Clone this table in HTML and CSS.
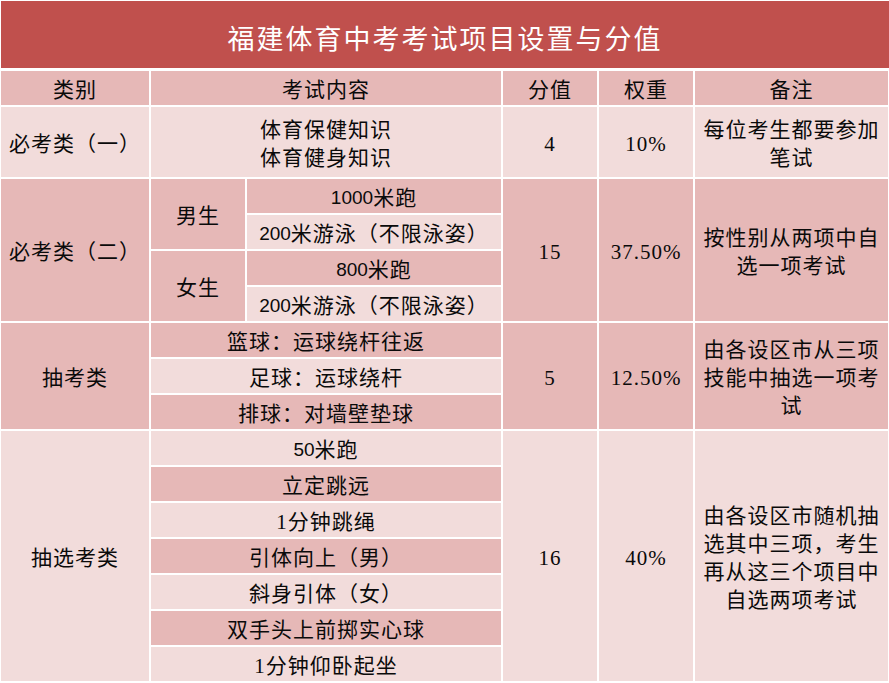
FILE: index.html
```html
<!DOCTYPE html>
<html lang="zh-CN">
<head>
<meta charset="utf-8">
<title>福建体育中考考试项目设置与分值</title>
<link rel="stylesheet" href="styles.css">
</head>
<body>
<div class="page">
  <div class="title">福建体育中考考试项目设置与分值</div>
  <div class="grid">
    <div class="cell dk">类别</div>
    <div class="cell dk c2">考试内容</div>
    <div class="cell dk">分值</div>
    <div class="cell dk">权重</div>
    <div class="cell dk">备注</div>

    <div class="cell lt r2">必考类（一）</div>
    <div class="cell lt c2 r2 lines"><span>体育保健知识</span><span>体育健身知识</span></div>
    <div class="cell lt r2">4</div>
    <div class="cell lt r2">10%</div>
    <div class="cell lt r2 note">每位考生都要参加笔试</div>

    <div class="cell dk r4">必考类（二）</div>
    <div class="cell dk r2">男生</div>
    <div class="cell dk"><span class="sn">1000</span>米跑</div>
    <div class="cell dk r4">15</div>
    <div class="cell dk r4">37.50%</div>
    <div class="cell dk r4 note">按性别从两项中自选一项考试</div>
    <div class="cell lt"><span class="sn">200</span>米游泳（不限泳姿）</div>
    <div class="cell dk r2">女生</div>
    <div class="cell dk"><span class="sn">800</span>米跑</div>
    <div class="cell lt"><span class="sn">200</span>米游泳（不限泳姿）</div>

    <div class="cell dk r3">抽考类</div>
    <div class="cell dk c2">篮球：运球绕杆往返</div>
    <div class="cell dk r3">5</div>
    <div class="cell dk r3">12.50%</div>
    <div class="cell dk r3 note">由各设区市从三项技能中抽选一项考试</div>
    <div class="cell lt c2">足球：运球绕杆</div>
    <div class="cell dk c2">排球：对墙壁垫球</div>

    <div class="cell lt r7">抽选考类</div>
    <div class="cell lt c2"><span class="sn">50</span>米跑</div>
    <div class="cell lt r7">16</div>
    <div class="cell lt r7">40%</div>
    <div class="cell lt r7 note">由各设区市随机抽选其中三项，考生再从这三个项目中自选两项考试</div>
    <div class="cell dk c2">立定跳远</div>
    <div class="cell lt c2">1分钟跳绳</div>
    <div class="cell dk c2">引体向上（男）</div>
    <div class="cell lt c2">斜身引体（女）</div>
    <div class="cell dk c2">双手头上前掷实心球</div>
    <div class="cell lt c2">1分钟仰卧起坐</div>
  </div>
</div>
</body>
</html>
```

FILE: styles.css
```css
html, body {
  margin: 0;
  padding: 0;
  background: #ffffff;
}

.page {
  width: 888px;
  padding: 1px 0 0 1px;
  font-family: "Liberation Serif", "Noto Sans CJK SC", serif;
  color: #0a0a0a;
}

.title {
  height: 67px;
  box-sizing: border-box;
  padding-top: 6px;
  display: flex;
  align-items: center;
  justify-content: center;
  background: #C0504D;
  color: #ffffff;
  font-size: 27px;
  letter-spacing: 2px;
  margin-bottom: 3px;
}

.grid {
  display: grid;
  grid-template-columns: 148px 94px 254px 94px 94px 193px;
  grid-auto-rows: 34px;
  gap: 2px;
  background: #ffffff;
}

.cell {
  display: flex;
  align-items: center;
  justify-content: center;
  text-align: center;
  font-size: 21px;
  letter-spacing: 1px;
  line-height: 28px;
  padding: 3px 4px 0;
  white-space: nowrap;
}

.dk { background: #E6B8B7; }
.lt { background: #F2DCDB; }

.c2 { grid-column: span 2; }
.r2 { grid-row: span 2; }
.r3 { grid-row: span 3; }
.r4 { grid-row: span 4; }
.r7 { grid-row: span 7; }

.lines {
  flex-direction: column;
}

.note {
  white-space: normal;
  padding: 3px 7px 0;
}

.sn {
  font-family: "Liberation Sans", "Noto Sans CJK SC", sans-serif;
  font-size: 19px;
  letter-spacing: 0;
}
```
